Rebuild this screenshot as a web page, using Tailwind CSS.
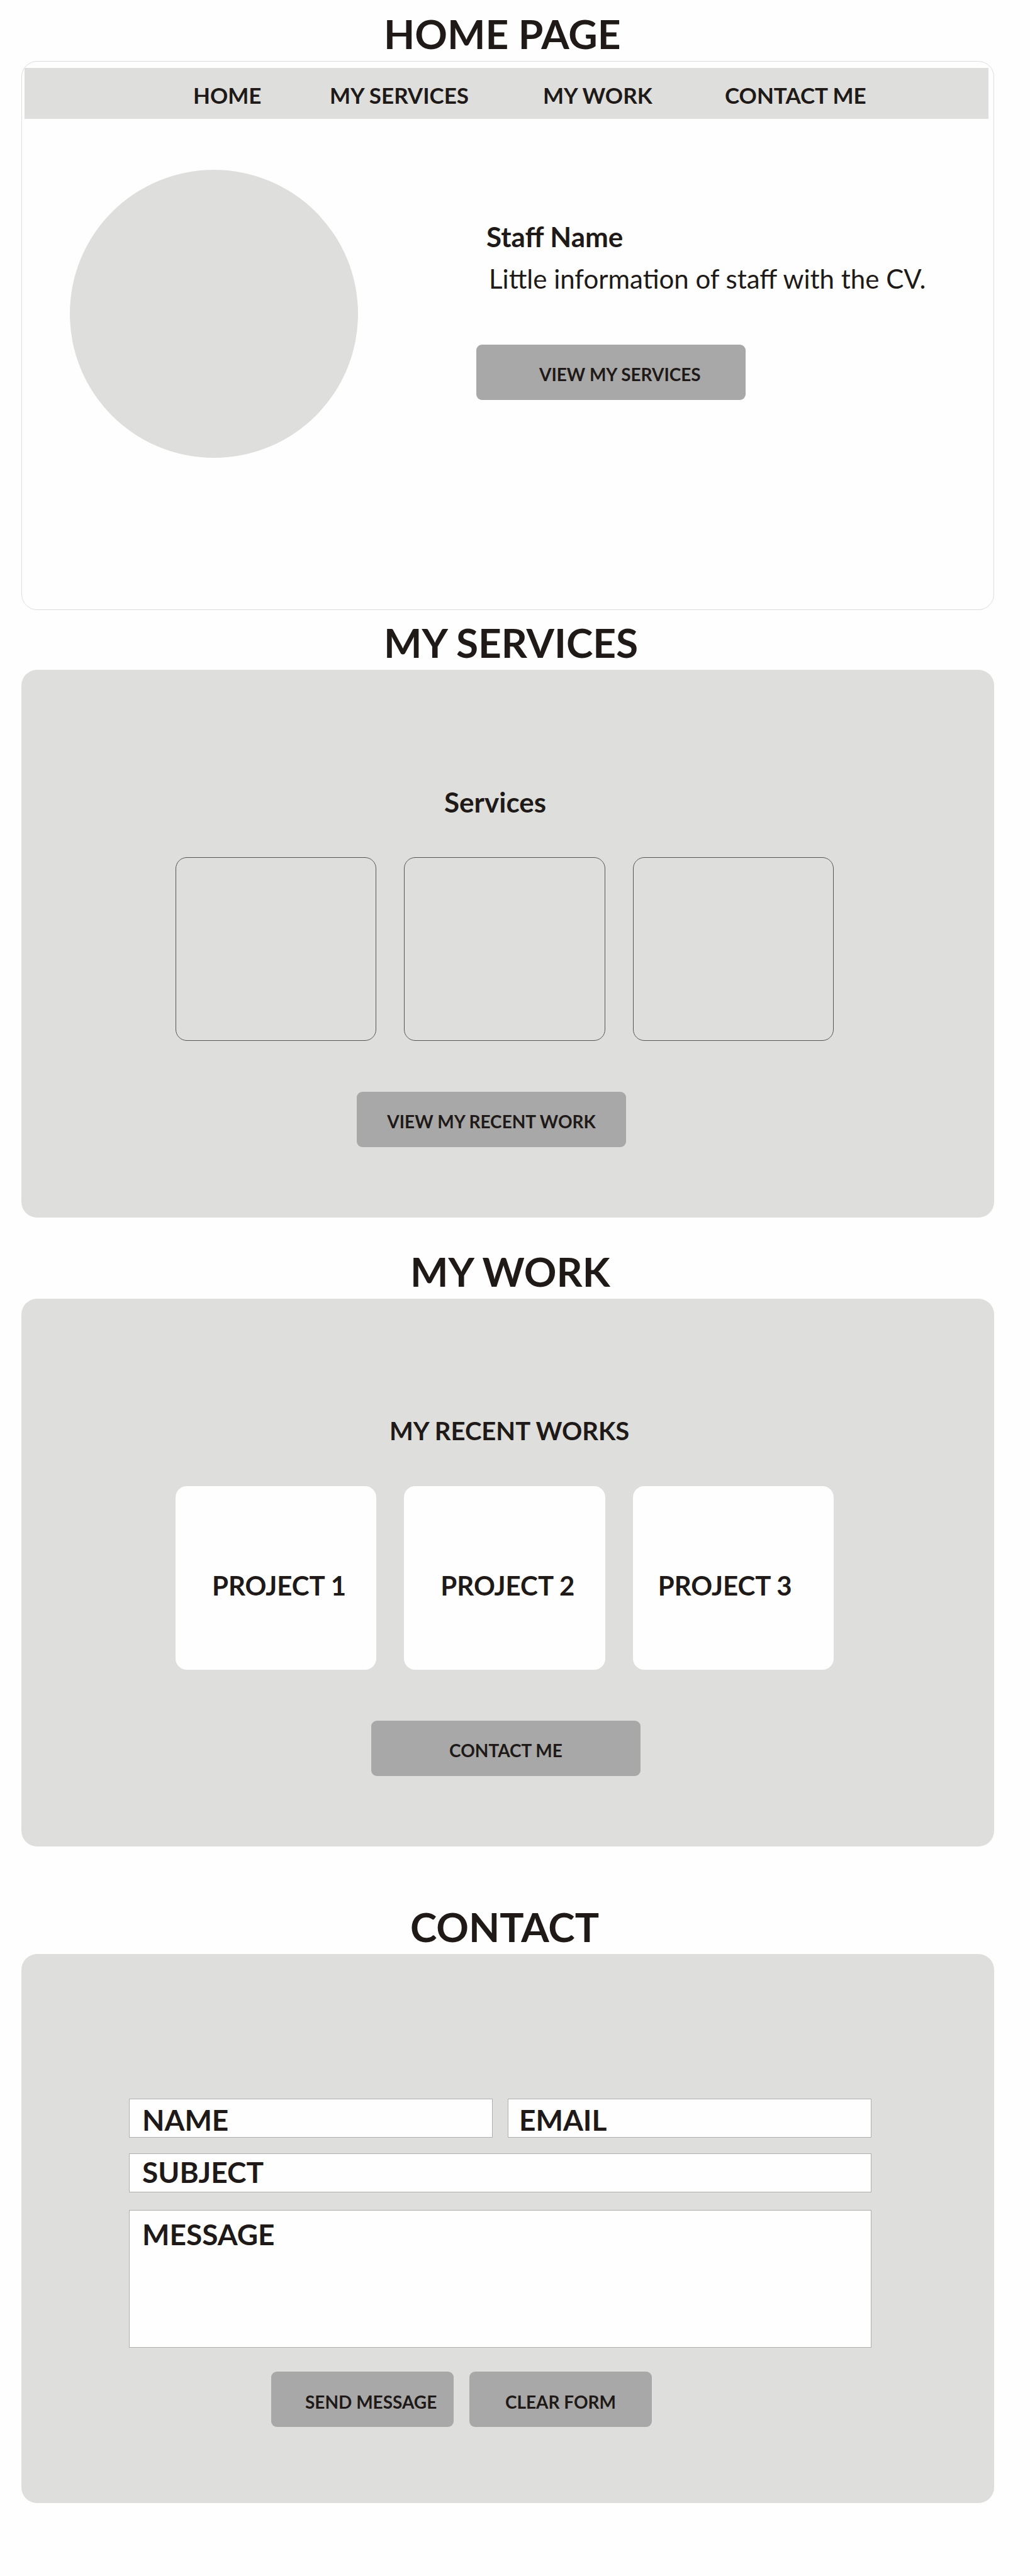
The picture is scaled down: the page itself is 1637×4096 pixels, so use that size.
<!DOCTYPE html>
<html lang="en">
<head>
<meta charset="utf-8">
<meta name="viewport" content="width=device-width, initial-scale=1">
<title>Portfolio wireframe</title>
<script src="https://cdn.jsdelivr.net/npm/@tailwindcss/browser@4"></script>
</head>
<body class="bg-[#fefefe] font-['Lato',sans-serif] font-bold text-[#1f1a17]">
<main class="pl-[34px] pr-[57px] pb-[116px]">

  <section id="home">
    <h1 class="pt-5 pb-[9px] pl-[576px] text-[64px] leading-[68px]">HOME PAGE</h1>
    <div class="rounded-[25px] border border-[#dededd] pb-[241px]">
      <nav class="mt-[10px] mr-2 ml-1 grid h-[81px] grid-cols-[217px_339px_289px_auto] items-center bg-[#dededc] pt-[5px] pl-[268px] text-[35px] leading-10">
        <a href="#home">HOME</a>
        <a href="#services">MY SERVICES</a>
        <a href="#work">MY WORK</a>
        <a href="#contact">CONTACT ME</a>
      </nav>
      <div class="mt-[81px] flex gap-[188px] pl-[76px]">
        <div class="size-[458px] shrink-0 rounded-full bg-[#dededc]"></div>
        <div class="pt-[82px]">
          <h2 class="pl-4 text-[44px] leading-[48px]">Staff Name</h2>
          <p class="mt-[19px] pl-5 text-[42px] leading-[48px] font-normal">Little information of staff with the CV.</p>
          <button type="button" class="mt-[81px] h-[88px] w-[428px] rounded-[9px] bg-[#a8a8a8] pt-[6px] pl-[100px] text-left text-[28px]">VIEW MY SERVICES</button>
        </div>
      </div>
    </div>
  </section>

  <section id="services">
    <h2 class="pt-[18px] pb-[9px] pl-[576px] text-[64px] leading-[68px]">MY SERVICES</h2>
    <div class="rounded-[25px] bg-[#dededc] pt-[186px] pr-[255px] pb-28 pl-[245px]">
      <h3 class="pl-[427px] text-[44px] leading-[48px]">Services</h3>
      <div class="mt-16 grid grid-cols-3 gap-11">
        <div class="h-[292px] rounded-[18px] border border-[#555453]"></div>
        <div class="h-[292px] rounded-[18px] border border-[#555453]"></div>
        <div class="h-[292px] rounded-[18px] border border-[#555453]"></div>
      </div>
      <button type="button" class="mt-[81px] ml-[288px] block h-[88px] w-[428px] rounded-[9px] bg-[#a8a8a8] pt-[6px] text-[28px]">VIEW MY RECENT WORK</button>
    </div>
  </section>

  <section id="work">
    <h2 class="pt-[52px] pb-[9px] pl-[618px] text-[64px] leading-[68px]">MY WORK</h2>
    <div class="rounded-[25px] bg-[#dededc] pt-[186px] pr-[255px] pb-28 pl-[245px]">
      <h3 class="pl-[340px] text-[40px] leading-[48px]">MY RECENT WORKS</h3>
      <div class="mt-16 grid grid-cols-3 gap-11 text-[42px] leading-[48px]">
        <div class="flex h-[292px] items-center rounded-[18px] bg-[#fefefe] pt-6 pl-[58px]">PROJECT 1</div>
        <div class="flex h-[292px] items-center rounded-[18px] bg-[#fefefe] pt-6 pl-[58px]">PROJECT 2</div>
        <div class="flex h-[292px] items-center rounded-[18px] bg-[#fefefe] pt-6 pl-10">PROJECT 3</div>
      </div>
      <button type="button" class="mt-[81px] ml-[311px] block h-[88px] w-[428px] rounded-[9px] bg-[#a8a8a8] pt-[6px] text-[28px]">CONTACT ME</button>
    </div>
  </section>

  <section id="contact">
    <h2 class="pt-[94px] pb-[9px] pl-[618px] text-[64px] leading-[68px]">CONTACT</h2>
    <form class="rounded-[25px] bg-[#dededc] pt-[230px] pr-[195px] pb-[121px] pl-[171px]">
      <div class="grid grid-cols-2 gap-x-6">
        <input type="text" aria-label="Name" placeholder="NAME" class="h-[62px] w-full border border-[#b0b0af] bg-[#fefefe] pt-1 pl-5 text-[46px] leading-[56px] placeholder:text-[#1f1a17] placeholder:opacity-100">
        <input type="email" aria-label="Email" placeholder="EMAIL" class="h-[62px] w-full border border-[#b0b0af] bg-[#fefefe] pt-1 pl-[17px] text-[46px] leading-[56px] placeholder:text-[#1f1a17] placeholder:opacity-100">
        <input type="text" aria-label="Subject" placeholder="SUBJECT" class="col-span-2 mt-[25px] h-[62px] w-full border border-[#b0b0af] bg-[#fefefe] pb-1 pl-5 text-[46px] leading-[56px] placeholder:text-[#1f1a17] placeholder:opacity-100">
        <textarea aria-label="Message" placeholder="MESSAGE" class="col-span-2 mt-7 block h-[219px] w-full resize-none border border-[#b0b0af] bg-[#fefefe] pt-[10px] pl-5 text-[46px] leading-[56px] placeholder:text-[#1f1a17] placeholder:opacity-100"></textarea>
      </div>
      <div class="mt-[38px] flex gap-[25px] pl-[226px]">
        <button type="submit" class="h-[88px] w-[290px] rounded-[9px] bg-[#a8a8a8] pt-2 pl-[54px] text-left text-[28px] whitespace-nowrap">SEND MESSAGE</button>
        <button type="reset" class="h-[88px] w-[290px] rounded-[9px] bg-[#a8a8a8] pt-2 text-[28px]">CLEAR FORM</button>
      </div>
    </form>
  </section>

</main>
</body>
</html>
